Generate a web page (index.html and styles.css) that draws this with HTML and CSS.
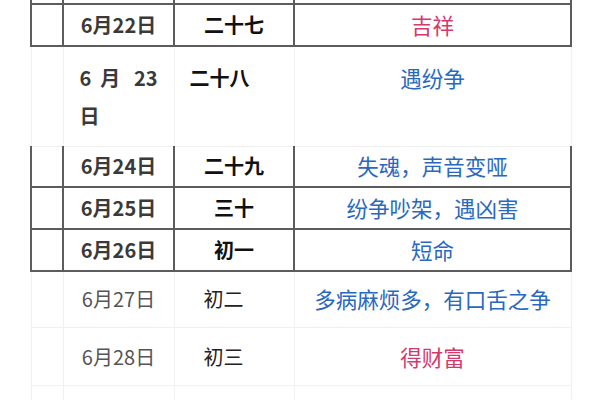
FILE: index.html
```html
<!DOCTYPE html>
<html lang="zh">
<head>
<meta charset="utf-8">
<link rel="stylesheet" href="styles.css">
</head>
<body>
<div class="wrap">
<table class="cal">
  <colgroup>
    <col class="c0"><col class="c1"><col class="c2"><col class="c3">
  </colgroup>
  <tr class="dark prev"><td></td><td></td><td></td><td></td></tr>
  <tr class="dark r42">
    <td></td><td class="date">6月22日</td><td class="lunar">二十七</td><td class="luck">吉祥</td>
  </tr>
  <tr class="light tall">
    <td></td><td class="date just">6 月 23 日</td><td class="lunar left">二十八</td><td class="bad">遇纷争</td>
  </tr>
  <tr class="dark r40 nt">
    <td></td><td class="date">6月24日</td><td class="lunar">二十九</td><td class="bad">失魂，声音变哑</td>
  </tr>
  <tr class="dark r42">
    <td></td><td class="date">6月25日</td><td class="lunar">三十</td><td class="bad">纷争吵架，遇凶害</td>
  </tr>
  <tr class="dark r42">
    <td></td><td class="date">6月26日</td><td class="lunar">初一</td><td class="bad">短命</td>
  </tr>
  <tr class="light r57 plain">
    <td></td><td class="date">6月27日</td><td class="lunar left2">初二</td><td class="bad">多病麻烦多，有口舌之争</td>
  </tr>
  <tr class="light r58 plain">
    <td></td><td class="date">6月28日</td><td class="lunar left2">初三</td><td class="luck">得财富</td>
  </tr>
  <tr class="light r58 plain">
    <td></td><td class="date"></td><td class="lunar left2"></td><td class="luck"></td>
  </tr>
</table>
</div>
</body>
</html>
```

FILE: styles.css
```css
html, body {
  margin: 0;
  padding: 0;
  background: #ffffff;
  overflow: hidden;
}
body {
  width: 600px;
  height: 400px;
  font-family: "Noto Sans CJK SC", "Noto Sans", sans-serif;
  font-size: 20px;
}
.wrap {
  padding-left: 30px;
  margin-top: -37px;
}
.cal {
  border-collapse: collapse;
  width: 540px;
  table-layout: fixed;
}
.c0 { width: 32px; }
.c1 { width: 111px; }
.c2 { width: 120px; }
.c3 { width: 277px; }
.cal td {
  padding: 0 16px;
  text-align: center;
  vertical-align: middle;
  line-height: 38px;
}
.cal td:first-child { padding: 0; }
.dark td { border: 2px solid #5c5c5c; }
.light td { border: 1px solid #f0f0f0; }
.nt td { border-top: 1px solid #f0f0f0; }
.prev { height: 40px; }
.r40 { height: 40px; }
.r42 { height: 42px; }
.r57 { height: 57px; }
.r58 { height: 58px; }
.tall td {
  vertical-align: top;
  padding-top: 12px;
  padding-bottom: 11px;
}
.tall td:first-child { padding: 0; }
.date {
  font-weight: 700;
  color: #3a3a3a;
}
.lunar {
  font-weight: 700;
  color: #111111;
}
.just {
  text-align: justify !important;
  text-align-last: left;
}
.left { text-align: left !important; padding-left: 15px !important; }
.left2 { text-align: left !important; padding-left: 29px !important; }
.plain .date { font-weight: 400; color: #555555; }
.plain .lunar { font-weight: 400; color: #222222; }
.luck { color: #d23a6c; font-size: 21.5px; }
.bad { color: #2a68c0; font-size: 21.5px; }
```
